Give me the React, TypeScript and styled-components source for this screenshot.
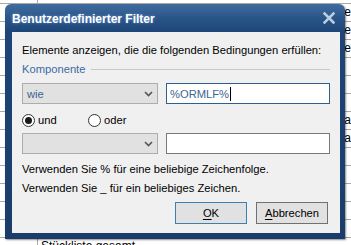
import styled, { createGlobalStyle } from "styled-components"

const GlobalStyle = createGlobalStyle`
  html, body {
    margin: 0;
    padding: 0;
    background: #ffffff;
    overflow: hidden;
  }
  body {
    font-family: "Liberation Sans", Arial, sans-serif;
    font-size: 12px;
  }
`

const Page = styled.div`
  position: relative;
  width: 351px;
  height: 245px;
  overflow: hidden;
  background: #ffffff;
`

const Sheet = styled.div`
  display: flex;
  flex-direction: column;
  margin-top: -14px;
`

const SheetRow = styled.div`
  display: flex;
  height: 18px;
  border-bottom: 1px solid #a9a9a9;
  box-sizing: border-box;
  flex-shrink: 0;
`

const SheetKey = styled.div`
  width: 37px;
  border-right: 1px solid #a9a9a9;
  flex-shrink: 0;
`

const SheetCell = styled.div<{ $align: string }>`
  flex: 1;
  padding: 0 0 0 3px;
  font-family: "Liberation Sans", Arial, sans-serif;
  font-size: 12px;
  line-height: 17px;
  color: #000;
  white-space: nowrap;
  overflow: hidden;
  text-align: ${(p) => p.$align};
`

const Window = styled.div`
  position: absolute;
  left: 5px;
  top: 4px;
  width: 340px;
  height: 235px;
  box-sizing: border-box;
  display: flex;
  flex-direction: column;
  padding: 0 5px 6px 7px;
  border-radius: 6px 6px 0 0;
  background: linear-gradient(to bottom, #3f6c9e 0px, #2a5589 14px, #1d4577 28px, #1a3c6a 100%);
  box-shadow: 1px 1px 2px rgba(0, 0, 0, 0.45);
`

const TitleBar = styled.div`
  height: 28px;
  display: flex;
  align-items: center;
  justify-content: space-between;
  flex-shrink: 0;
`

const Title = styled.div`
  font-family: "Liberation Sans", Arial, sans-serif;
  font-weight: bold;
  font-size: 12px;
  color: #ffffff;
  text-shadow: 0 0 3px rgba(160, 200, 255, 0.6);
  padding-top: 2px;
`

const CloseButton = styled.div`
  width: 16px;
  height: 16px;
  margin-right: 3px;
  display: flex;
  align-items: center;
  justify-content: center;
`

const Body = styled.div`
  flex: 1;
  background: #f0f0f0;
  display: flex;
  flex-direction: column;
  padding: 11px 10px 0 10px;
  font-family: "Liberation Sans", Arial, sans-serif;
  font-size: 11.2px;
  color: #000;
`

const Text = styled.div<{ $mt?: number }>`
  line-height: 14px;
  margin-top: ${(p) => p.$mt ?? 0}px;
  white-space: nowrap;
`

const GroupHeader = styled.div`
  display: flex;
  align-items: center;
  gap: 6px;
  margin-top: 4px;
  height: 16px;
  color: #3c6aa4;
`

const GroupLine = styled.div`
  flex: 1;
  height: 1px;
  background: #c8c8c8;
`

const Row = styled.div<{ $mt: number }>`
  display: flex;
  gap: 8px;
  margin-top: ${(p) => p.$mt}px;
`

const Select = styled.div`
  width: 136px;
  height: 21px;
  box-sizing: border-box;
  border: 1px solid #adadad;
  background: #e1e1e1;
  display: flex;
  align-items: center;
  justify-content: space-between;
  padding: 0 4px 0 4px;
  color: #3d6591;
`

const Input = styled.div<{ $focused?: boolean }>`
  flex: 1;
  height: 21px;
  box-sizing: border-box;
  border: 1px solid ${(p) => (p.$focused ? "#2e5f91" : "#7a7a7a")};
  background: #ffffff;
  display: flex;
  align-items: center;
  padding-left: 3px;
  color: #3d6591;
`

const Caret = styled.span`
  display: inline-block;
  width: 1px;
  height: 14px;
  background: #000;
  margin-left: 1px;
`

const RadioRow = styled.div`
  display: flex;
  align-items: center;
  margin-top: 8px;
  height: 16px;
`

const RadioItem = styled.label<{ $width: number }>`
  display: flex;
  align-items: center;
  gap: 3px;
  width: ${(p) => p.$width}px;
`

const RadioCircle = styled.span<{ $checked?: boolean }>`
  width: 13px;
  height: 13px;
  box-sizing: border-box;
  border-radius: 50%;
  border: 1px solid #333333;
  background: #ffffff;
  display: flex;
  align-items: center;
  justify-content: center;
  &::after {
    content: "";
    width: 7px;
    height: 7px;
    border-radius: 50%;
    background: ${(p) => (p.$checked ? "#1a1a1a" : "transparent")};
  }
`

const Buttons = styled.div`
  display: flex;
  justify-content: flex-end;
  gap: 9px;
  margin-top: 7px;
  padding-right: 2px;
`

const Button = styled.div<{ $default?: boolean }>`
  width: 72px;
  height: 22px;
  box-sizing: border-box;
  border: 1px solid ${(p) => (p.$default ? "#3c7fb1" : "#707070")};
  background: #e1e1e1;
  display: flex;
  align-items: center;
  justify-content: center;
  u {
    text-decoration: underline;
    text-underline-offset: 2px;
  }
`

const Chevron = () => (
  <svg width="9" height="6" viewBox="0 0 9 6">
    <path d="M1 1 L4.5 4.5 L8 1" stroke="#555" strokeWidth="1.6" fill="none" />
  </svg>
)

// rows of the sheet behind the dialog; only the right edge and the last row peek out
const sheetRows: { text: string; align: string }[] = [
  { text: "", align: "right" },
  { text: "e", align: "right" },
  { text: "e", align: "right" },
  { text: "e", align: "right" },
  { text: "", align: "right" },
  { text: "", align: "right" },
  { text: "", align: "right" },
  { text: "la", align: "right" },
  { text: "la", align: "right" },
  { text: "", align: "right" },
  { text: "", align: "right" },
  { text: "", align: "right" },
  { text: "", align: "right" },
  { text: "", align: "right" },
  { text: "Stückliste gesamt", align: "left" },
]

export default function App() {
  return (
    <Page>
      <GlobalStyle />
      <Sheet>
        {sheetRows.map((r, i) => (
          <SheetRow key={i}>
            <SheetKey />
            <SheetCell $align={r.align}>{r.text}</SheetCell>
          </SheetRow>
        ))}
      </Sheet>
      <Window>
        <TitleBar>
          <Title>Benutzerdefinierter Filter</Title>
          <CloseButton>
            <svg width="12" height="12" viewBox="0 0 12 12">
              <path d="M1.5 1.5 L10.5 10.5 M10.5 1.5 L1.5 10.5" stroke="#b9cde3" strokeWidth="2.6" strokeLinecap="square" />
            </svg>
          </CloseButton>
        </TitleBar>
        <Body>
          <Text>Elemente anzeigen, die die folgenden Bedingungen erfüllen:</Text>
          <GroupHeader>
            <span>Komponente</span>
            <GroupLine />
          </GroupHeader>
          <Row $mt={6}>
            <Select>
              <span>wie</span>
              <Chevron />
            </Select>
            <Input $focused>
              %ORMLF%<Caret />
            </Input>
          </Row>
          <RadioRow>
            <RadioItem $width={66}>
              <RadioCircle $checked />
              und
            </RadioItem>
            <RadioItem $width={60}>
              <RadioCircle />
              oder
            </RadioItem>
          </RadioRow>
          <Row $mt={5}>
            <Select>
              <span />
              <Chevron />
            </Select>
            <Input />
          </Row>
          <Text $mt={8}>Verwenden Sie % für eine beliebige Zeichenfolge.</Text>
          <Text $mt={5}>Verwenden Sie _ für ein beliebiges Zeichen.</Text>
          <Buttons>
            <Button $default>
              <span><u>O</u>K</span>
            </Button>
            <Button>
              <span><u>A</u>bbrechen</span>
            </Button>
          </Buttons>
        </Body>
      </Window>
    </Page>
  )
}
